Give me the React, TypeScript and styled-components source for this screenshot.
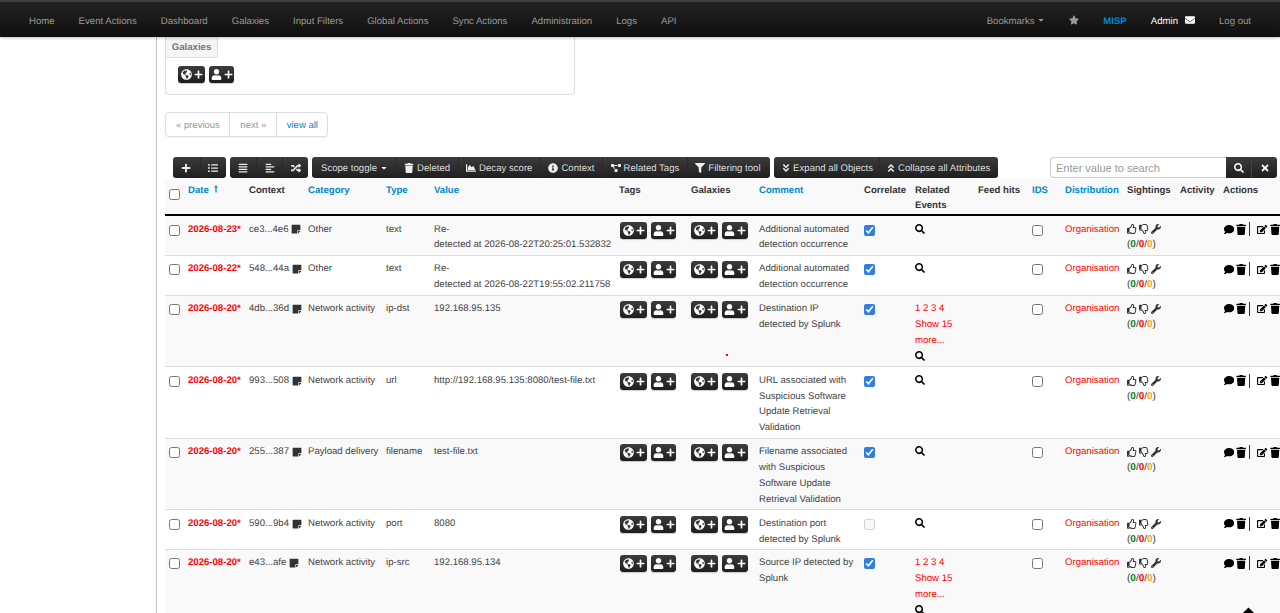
import * as React from "react";
import styled, { createGlobalStyle } from "styled-components";
import {
  FaAlignJustify,
  FaAlignLeft,
  FaAngleDoubleDown,
  FaAngleDoubleUp,
  FaCaretDown,
  FaCaretUp,
  FaChartArea,
  FaComment,
  FaEdit,
  FaEnvelope,
  FaFilter,
  FaGlobeAmericas,
  FaInfoCircle,
  FaListUl,
  FaLongArrowAltUp,
  FaPlus,
  FaProjectDiagram,
  FaRandom,
  FaRegThumbsDown,
  FaRegThumbsUp,
  FaSearch,
  FaStar,
  FaStickyNote,
  FaTimes,
  FaTrash,
  FaUser,
  FaWrench,
} from "react-icons/fa";

const GlobalStyle = createGlobalStyle`
  html, body {
    margin: 0;
    height: 100%;
    overflow: hidden;
    background: #fff;
  }
  body {
    font-family: "Liberation Sans", Arial, sans-serif;
    font-size: 9.6px;
    color: #333;
    text-rendering: geometricPrecision;
  }
`;

const Page = styled.div`
  display: flex;
  flex-direction: column;
  height: 613px;
  overflow: hidden;
`;

const NavBar = styled.nav`
  flex: none;
  display: flex;
  align-items: center;
  justify-content: space-between;
  height: 32px;
  box-sizing: content-box;
  border-top: 2px solid #3b4048;
  padding: 3px 17px 0 17px;
  background: linear-gradient(#232323, #0f0f0f);
  box-shadow: 0 1px 3px rgba(0, 0, 0, 0.25);
  position: relative;
  z-index: 2;
`;

const NavGroup = styled.div`
  display: flex;
  align-items: center;
`;

const NavItem = styled.a<{ $tone?: "muted" | "white" | "brand" }>`
  display: inline-flex;
  align-items: center;
  gap: 7px;
  padding: 0 12px;
  font-size: 9.6px;
  font-weight: ${({ $tone }) => ($tone === "brand" ? 700 : 400)};
  color: ${({ $tone }) =>
    $tone === "white" ? "#fff" : $tone === "brand" ? "#0088cc" : "#999"};
`;

const NavIcon = styled.span`
  display: inline-flex;
  margin-top: -2px;
`;

const Body = styled.div`
  flex: 1;
  display: flex;
  min-height: 0;
`;

const Sidebar = styled.aside`
  flex: none;
  width: 156px;
  border-right: 1px solid #c4c4c4;
`;

const Main = styled.main`
  flex: none;
  width: 1200px;
  padding-left: 8px;
`;

const GalaxyPanel = styled.section`
  box-sizing: border-box;
  width: 410px;
  height: 58px;
  border: 1px solid #ddd;
  border-top: 0;
  border-radius: 0 0 4px 4px;
`;

const PanelTab = styled.div`
  box-sizing: border-box;
  width: 52px;
  height: 21px;
  line-height: 21px;
  text-align: center;
  font-size: 9.6px;
  font-weight: 700;
  color: #777;
  background: #f5f5f5;
  border-right: 1px solid #ddd;
  border-bottom: 1px solid #ddd;
  border-radius: 0 0 4px 0;
`;

const PanelBody = styled.div`
  padding: 8px 0 0 12px;
`;

const AddPill = styled.span<{ $width: number }>`
  display: inline-flex;
  align-items: center;
  justify-content: center;
  gap: 2px;
  box-sizing: border-box;
  width: ${({ $width }) => $width}px;
  height: 17px;
  border-radius: 3px;
  color: #fff;
  background: linear-gradient(#3c3c3c, #1e1e1e);
  box-shadow: 0 1px 1px rgba(0, 0, 0, 0.2);
  font-size: 11px;
`;

const PlusIcon = styled(FaPlus)`
  font-size: 9px;
`;

const Pagination = styled.div`
  display: flex;
  box-sizing: border-box;
  width: 163px;
  margin-top: 17px;
  height: 25px;
  border: 1px solid #ddd;
  border-radius: 4px;
  box-shadow: 0 1px 2px rgba(0, 0, 0, 0.05);
`;

const PageLink = styled.a<{ $active?: boolean }>`
  display: flex;
  align-items: center;
  padding: 1px ${({ $active }) => ($active ? 9 : 9.5)}px 0 10px;
  font-size: 9.5px;
  color: ${({ $active }) => ($active ? "#0088cc" : "#999")};
  & + & {
    border-left: 1px solid #ddd;
  }
`;

const Toolbar = styled.div`
  display: flex;
  align-items: flex-start;
  margin-top: 20px;
  height: 22px;
  width: 1112px;
  gap: 4px;
  padding-left: 8px;
  box-sizing: border-box;
`;

const ToolGroup = styled.div<{ $text?: boolean }>`
  display: flex;
  height: 21px;
  border-radius: 3px;
  overflow: hidden;
  padding: 0 ${({ $text }) => ($text ? 1.5 : 0)}px;
  background: linear-gradient(#3b3b3b, #1f1f1f);
`;

const ToolButton = styled.span<{ $square?: number; $tight?: boolean }>`
  display: inline-flex;
  align-items: center;
  justify-content: center;
  gap: ${({ $tight }) => ($tight ? 2 : 3)}px;
  box-sizing: border-box;
  color: #ddd;
  font-size: 9.6px;
  white-space: nowrap;
  padding: 1px ${({ $square, $tight }) => ($square ? 0 : $tight ? 6 : 7.5)}px 0;
  width: ${({ $square }) => ($square ? `${$square}px` : "auto")};
  svg {
    color: #eee;
    font-size: 10px;
  }
  & + & {
    border-left: 1px solid #2a2a2a;
  }
`;

const SearchBox = styled.div`
  display: flex;
  margin-left: auto;
  height: 21px;
`;

const SearchInput = styled.input`
  box-sizing: border-box;
  width: 176px;
  height: 21px;
  padding: 0 5px;
  font: 11px "Liberation Sans", Arial, sans-serif;
  color: #555;
  border: 1px solid #ccc;
  border-right: 0;
  border-radius: 4px 0 0 4px;
  outline: none;
  &::placeholder {
    color: #999;
    opacity: 1;
  }
`;

const SearchButton = styled.span<{ $last?: boolean }>`
  display: inline-flex;
  align-items: center;
  justify-content: center;
  width: 25px;
  color: #fff;
  font-size: 10px;
  background: linear-gradient(#3b3b3b, #1f1f1f);
  border-radius: ${({ $last }) => ($last ? "0 3px 3px 0" : "0")};
  & + & {
    border-left: 1px solid #444;
  }
`;

const Table = styled.table`
  table-layout: fixed;
  width: 1120px;
  border-collapse: separate;
  border-spacing: 0;
  color: #444;
`;

const HeadCell = styled.th<{ $link?: boolean }>`
  padding: 3.5px 5px 0 0;
  line-height: 15.75px;
  text-align: left;
  vertical-align: top;
  font-weight: 700;
  color: ${({ $link }) => ($link ? "#0088cc" : "#333")};
  background: #f9f9f9;
  border-bottom: 2px solid #000;
`;

const HeadCheck = styled.input`
  display: block;
  width: 11px;
  height: 11px;
  margin: 6px 0 0 4px;
`;

const SortArrow = styled(FaLongArrowAltUp)`
  margin-left: 3px;
  font-size: 8px;
`;

const Row = styled.tr<{ $odd: boolean }>`
  background: ${({ $odd }) => ($odd ? "#f9f9f9" : "#fff")};
`;

const Cell = styled.td<{ $pre?: boolean }>`
  padding: 5.5px 5px 1.5px 0;
  line-height: 15.875px;
  vertical-align: top;
  border-bottom: 1px solid #ddd;
  white-space: ${({ $pre }) => ($pre ? "pre" : "normal")};
`;

const BoxCell = styled(Cell)`
  padding-left: 4px;
`;

const CommentCell = styled(Cell)`
  padding-right: 8px;
`;

const DateText = styled.span`
  color: #f00;
  font-weight: 700;
`;

const RedText = styled.span`
  color: #f00;
  white-space: pre-line;
`;

const ContextId = styled.span`
  display: inline-flex;
  align-items: center;
  svg {
    color: #333;
    font-size: 10px;
  }
`;

const PillRow = styled.div<{ $shift?: number }>`
  display: flex;
  gap: 4px;
  margin-left: ${({ $shift }) => $shift ?? 0}px;
`;

const RedDot = styled.div`
  width: 2px;
  height: 2px;
  margin: 36px 0 0 35px;
  background: #f00;
`;

const Check = styled.input`
  display: block;
  width: 11px;
  height: 11px;
  margin: 3px 0 0;
  accent-color: #2f7fe0;
`;

const SearchIcon = styled(FaSearch)`
  display: block;
  color: #000;
  font-size: 10px;
  margin: 2px 0 4px;
`;

const SightRow = styled.div`
  display: flex;
  align-items: center;
  gap: 2px;
  height: 15.875px;
  color: #333;
  font-size: 10px;
`;

const Counter = styled.span<{ $tone: "green" | "red" | "orange" }>`
  font-weight: 700;
  color: ${({ $tone }) =>
    $tone === "green" ? "green" : $tone === "red" ? "red" : "orange"};
`;

const ActionRow = styled.div`
  display: flex;
  align-items: center;
  color: #000;
  font-size: 11px;
  height: 15.875px;
  white-space: nowrap;
  gap: 2px;
  padding-left: 1px;
`;

const ActionDivider = styled.span`
  width: 1px;
  height: 14px;
  margin: 0 6px 0 0;
  background: #333;
`;

const BackToTop = styled(FaCaretUp)`
  position: fixed;
  right: 22px;
  bottom: -7px;
  font-size: 19px;
  color: #000;
`;

const navLeft = [
  "Home",
  "Event Actions",
  "Dashboard",
  "Galaxies",
  "Input Filters",
  "Global Actions",
  "Sync Actions",
  "Administration",
  "Logs",
  "API",
];

const columns: { label: string; width: number; link?: boolean }[] = [
  { label: "", width: 23 },
  { label: "Date", width: 61, link: true },
  { label: "Context", width: 59 },
  { label: "Category", width: 78, link: true },
  { label: "Type", width: 48, link: true },
  { label: "Value", width: 185, link: true },
  { label: "Tags", width: 72 },
  { label: "Galaxies", width: 68 },
  { label: "Comment", width: 105, link: true },
  { label: "Correlate", width: 51 },
  { label: "Related Events", width: 63 },
  { label: "Feed hits", width: 54 },
  { label: "IDS", width: 33, link: true },
  { label: "Distribution", width: 62, link: true },
  { label: "Sightings", width: 53 },
  { label: "Activity", width: 43 },
  { label: "Actions", width: 62 },
];

interface Attribute {
  date: string;
  context: string;
  category: string;
  type: string;
  value: string;
  comment: string;
  correlate?: boolean;
  related?: boolean;
  dot?: boolean;
}

const rows: Attribute[] = [
  {
    date: "2026-08-23*",
    context: "ce3...4e6",
    category: "Other",
    type: "text",
    value: "Re-\ndetected at 2026-08-22T20:25:01.532832",
    comment: "Additional automated detection occurrence",
    correlate: true,
  },
  {
    date: "2026-08-22*",
    context: "548...44a",
    category: "Other",
    type: "text",
    value: "Re-\ndetected at 2026-08-22T19:55:02.211758",
    comment: "Additional automated detection occurrence",
    correlate: true,
  },
  {
    date: "2026-08-20*",
    context: "4db...36d",
    category: "Network activity",
    type: "ip-dst",
    value: "192.168.95.135",
    comment: "Destination IP detected by Splunk",
    correlate: true,
    related: true,
    dot: true,
  },
  {
    date: "2026-08-20*",
    context: "993...508",
    category: "Network activity",
    type: "url",
    value: "http://192.168.95.135:8080/test-file.txt",
    comment: "URL associated with Suspicious Software Update Retrieval Validation",
    correlate: true,
  },
  {
    date: "2026-08-20*",
    context: "255...387",
    category: "Payload delivery",
    type: "filename",
    value: "test-file.txt",
    comment: "Filename associated with Suspicious Software Update Retrieval Validation",
    correlate: true,
  },
  {
    date: "2026-08-20*",
    context: "590...9b4",
    category: "Network activity",
    type: "port",
    value: "8080",
    comment: "Destination port detected by Splunk",
  },
  {
    date: "2026-08-20*",
    context: "e43...afe",
    category: "Network activity",
    type: "ip-src",
    value: "192.168.95.134",
    comment: "Source IP detected by Splunk",
    correlate: true,
    related: true,
  },
];

const AddPills = ({ shift, second = 26 }: { shift?: number; second?: number }) => (
  <PillRow $shift={shift}>
    <AddPill $width={27}>
      <FaGlobeAmericas />
      <PlusIcon />
    </AddPill>
    <AddPill $width={second}>
      <FaUser />
      <PlusIcon />
    </AddPill>
  </PillRow>
);

const App = () => (
  <Page>
    <GlobalStyle />
    <NavBar>
      <NavGroup>
        {navLeft.map((item) => (
          <NavItem key={item}>{item}</NavItem>
        ))}
      </NavGroup>
      <NavGroup>
        <NavItem>
          <span>
            Bookmarks <FaCaretDown size={8} />
          </span>
        </NavItem>
        <NavItem>
          <NavIcon>
            <FaStar size={10} />
          </NavIcon>
        </NavItem>
        <NavItem $tone="brand">MISP</NavItem>
        <NavItem $tone="white">
          Admin
          <NavIcon>
            <FaEnvelope size={10} />
          </NavIcon>
        </NavItem>
        <NavItem>Log out</NavItem>
      </NavGroup>
    </NavBar>
    <Body>
      <Sidebar />
      <Main>
        <GalaxyPanel>
          <PanelTab>Galaxies</PanelTab>
          <PanelBody>
            <AddPills second={25} />
          </PanelBody>
        </GalaxyPanel>
        <Pagination>
          <PageLink>« previous</PageLink>
          <PageLink>next »</PageLink>
          <PageLink $active>view all</PageLink>
        </Pagination>
        <Toolbar>
          <ToolGroup>
            <ToolButton $square={26.5}>
              <FaPlus />
            </ToolButton>
            <ToolButton $square={26.5}>
              <FaListUl />
            </ToolButton>
          </ToolGroup>
          <ToolGroup>
            <ToolButton $square={26}>
              <FaAlignJustify />
            </ToolButton>
            <ToolButton $square={26}>
              <FaAlignLeft />
            </ToolButton>
            <ToolButton $square={26}>
              <FaRandom />
            </ToolButton>
          </ToolGroup>
          <ToolGroup $text>
            <ToolButton>
              Scope toggle <FaCaretDown size={8} />
            </ToolButton>
            <ToolButton>
              <FaTrash /> Deleted
            </ToolButton>
            <ToolButton>
              <FaChartArea /> Decay score
            </ToolButton>
            <ToolButton>
              <FaInfoCircle /> Context
            </ToolButton>
            <ToolButton>
              <FaProjectDiagram /> Related Tags
            </ToolButton>
            <ToolButton>
              <FaFilter /> Filtering tool
            </ToolButton>
          </ToolGroup>
          <ToolGroup $text>
            <ToolButton $tight>
              <FaAngleDoubleDown /> Expand all Objects
            </ToolButton>
            <ToolButton $tight>
              <FaAngleDoubleUp /> Collapse all Attributes
            </ToolButton>
          </ToolGroup>
          <SearchBox>
            <SearchInput placeholder="Enter value to search" />
            <SearchButton>
              <FaSearch />
            </SearchButton>
            <SearchButton $last>
              <FaTimes />
            </SearchButton>
          </SearchBox>
        </Toolbar>
        <Table>
          <colgroup>
            {columns.map((c, i) => (
              <col key={i} width={c.width} />
            ))}
          </colgroup>
          <thead>
            <tr>
              <HeadCell>
                <HeadCheck type="checkbox" />
              </HeadCell>
              {columns.slice(1).map((c) => (
                <HeadCell key={c.label} $link={c.link}>
                  {c.label}
                  {c.label === "Date" && <SortArrow />}
                </HeadCell>
              ))}
            </tr>
          </thead>
          <tbody>
            {rows.map((row, i) => (
              <Row key={row.context} $odd={i % 2 === 0}>
                <BoxCell>
                  <Check type="checkbox" />
                </BoxCell>
                <Cell $pre>
                  <DateText>{row.date}</DateText>
                </Cell>
                <Cell $pre>
                  <ContextId>
                    {row.context} <FaStickyNote />
                  </ContextId>
                </Cell>
                <Cell>{row.category}</Cell>
                <Cell>{row.type}</Cell>
                <Cell $pre>{row.value}</Cell>
                <Cell>
                  <AddPills shift={1} second={25} />
                </Cell>
                <Cell>
                  <AddPills />
                  {row.dot && <RedDot />}
                </Cell>
                <CommentCell>{row.comment}</CommentCell>
                <Cell>
                  <Check
                    type="checkbox"
                    defaultChecked={row.correlate}
                    disabled={!row.correlate}
                  />
                </Cell>
                <Cell>
                  {row.related && (
                    <RedText>
                      1 2 3 4
                      {"\n"}Show 15
                      {"\n"}more...
                    </RedText>
                  )}
                  <SearchIcon />
                </Cell>
                <Cell />
                <Cell>
                  <Check type="checkbox" />
                </Cell>
                <Cell $pre>
                  <RedText>Organisation</RedText>
                </Cell>
                <Cell $pre>
                  <SightRow>
                    <FaRegThumbsUp />
                    <FaRegThumbsDown />
                    <FaWrench />
                  </SightRow>
                  <SightRow>
                    <span>
                      (<Counter $tone="green">0</Counter>/
                      <Counter $tone="red">0</Counter>/
                      <Counter $tone="orange">0</Counter>)
                    </span>
                  </SightRow>
                </Cell>
                <Cell />
                <Cell $pre>
                  <ActionRow>
                    <FaComment />
                    <FaTrash />
                    <ActionDivider />
                    <FaEdit />
                    <FaTrash />
                  </ActionRow>
                </Cell>
              </Row>
            ))}
          </tbody>
        </Table>
      </Main>
    </Body>
    <BackToTop />
  </Page>
);

export default App;
